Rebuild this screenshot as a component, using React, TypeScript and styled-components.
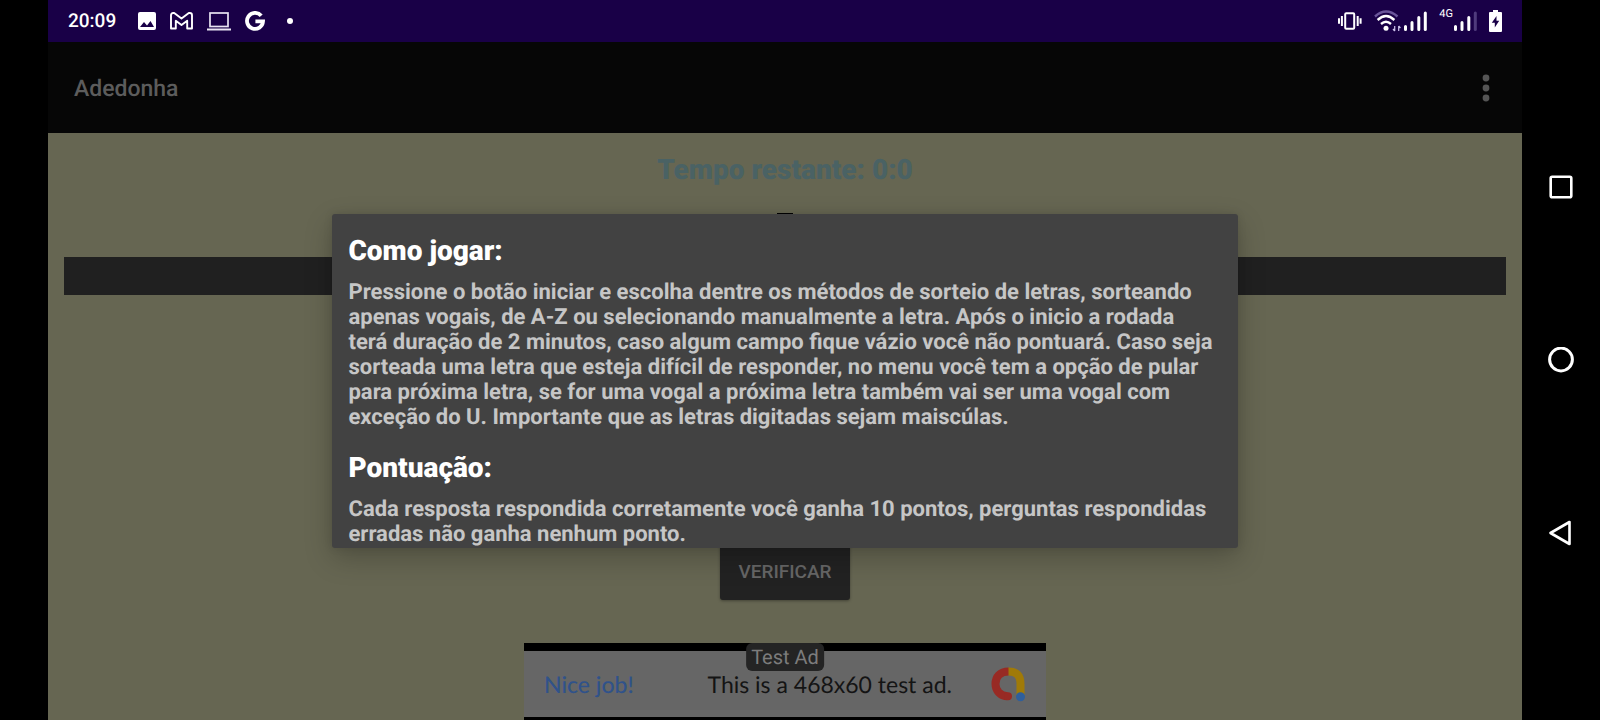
import React from "react";
import styled, { createGlobalStyle } from "styled-components";

const GlobalStyle = createGlobalStyle`
  *, *::before, *::after { box-sizing: border-box; }
  body {
    margin: 0;
    background: #000;
    font-family: Roboto, "Liberation Sans", sans-serif;
    text-rendering: geometricPrecision;
  }
  h1, h2, p { margin: 0; }
  button { padding: 0; border: 0; font: inherit; cursor: pointer; }
  svg { display: block; }
`;

const Device = styled.div`
  display: grid;
  grid-template-columns: 48px 1fr 78px;
  min-height: 100vh;
  background: #000;
`;

const Screen = styled.div`
  grid-column: 2;
  display: flex;
  flex-direction: column;
  background: #666652;
`;

const StatusBar = styled.header`
  display: flex;
  align-items: center;
  justify-content: space-between;
  height: 42px;
  padding: 0 20px;
  background: #190047;
  color: #fff;
`;

const StatusGroup = styled.div<{ $gap: number }>`
  display: flex;
  align-items: center;
  gap: ${(p) => p.$gap}px;
`;

const Clock = styled.time`
  font-size: 19px;
  font-weight: 500;
  line-height: 24px;
`;

const Activity = styled.div`
  position: relative;
  flex: 1;
  display: flex;
  flex-direction: column;
`;

const AppBar = styled.div`
  display: flex;
  align-items: center;
  justify-content: space-between;
  height: 91px;
  padding: 0 20px 0 26px;
  background: #060606;
`;

const AppTitle = styled.h1`
  padding-top: 2px;
  color: #5c5c5c;
  font-size: 23px;
  font-weight: 500;
  line-height: 28px;
`;

const IconButton = styled.button`
  display: grid;
  place-items: center;
  width: 32px;
  height: 48px;
  background: transparent;
`;

const Game = styled.main`
  flex: 1;
  display: flex;
  flex-direction: column;
  align-items: center;
`;

const Timer = styled.p`
  padding-top: 20px;
  color: #4a6264;
  font-size: 28px;
  font-weight: 900;
  line-height: 34px;
`;

const LetterSlot = styled.div`
  width: 16px;
  height: 2px;
  margin-top: 26px;
  background: #000;
`;

const AnswerStrip = styled.div`
  align-self: stretch;
  height: 38px;
  margin: 42px 16px 0;
  background: #202020;
`;

const Footer = styled.div`
  display: flex;
  flex-direction: column;
  align-items: center;
  gap: 43px;
  margin-top: auto;
`;

const VerifyButton = styled.button`
  width: 130px;
  height: 56px;
  border-radius: 3px;
  background: #222;
  box-shadow: 0 1px 3px rgba(0, 0, 0, 0.35);
  color: #666;
  font-size: 19px;
  font-weight: 500;
  line-height: 24px;
`;

const AdBanner = styled.a`
  position: relative;
  display: flex;
  align-items: center;
  width: 522px;
  height: 77px;
  padding: 0 20px;
  border: solid #000;
  border-width: 8px 0 3px;
  background: #666;
  font-family: Lato, Roboto, sans-serif;
  font-size: 23px;
  line-height: 28px;
  text-decoration: none;
`;

const AdLabel = styled.span`
  position: absolute;
  top: -8px;
  left: 50%;
  padding: 0 5px;
  transform: translateX(-50%);
  border-radius: 6px;
  background: #242424;
  color: #7c7c7c;
  font-family: Roboto, sans-serif;
  font-size: 20px;
  line-height: 28px;
`;

const AdLead = styled.span`
  color: #30528a;
  font-weight: 500;
`;

const AdText = styled.span`
  margin-left: auto;
  margin-right: 38px;
  color: #141414;
`;

const Overlay = styled.div`
  position: absolute;
  inset: 0;
  display: grid;
  place-items: center;
`;

const Dialog = styled.section`
  width: 61.4%;
  padding: 19px 16px 1px;
  border-radius: 3px;
  background: #424242;
  box-shadow: 0 10px 28px rgba(0, 0, 0, 0.22), 0 0 8px rgba(0, 0, 0, 0.1);
`;

const DialogTitle = styled.h2`
  color: #fff;
  font-size: 28px;
  font-weight: 900;
  line-height: 35px;
`;

const DialogText = styled.p`
  margin-top: 12px;
  color: #c6c6c6;
  font-size: 22px;
  font-weight: 700;
  line-height: 25px;

  & + h2 { margin-top: 20px; }
`;

const SystemNav = styled.nav`
  display: flex;
  flex-direction: column;
  align-items: center;
  justify-content: center;
  gap: 125px;
`;

const NavButton = styled.button`
  display: grid;
  place-items: center;
  width: 48px;
  height: 48px;
  background: transparent;
`;

const ImageIcon = () => (
  <svg width="18" height="18" viewBox="0 0 18 18">
    <rect width="18" height="18" rx="2" fill="#fff" />
    <path d="M2 15l4-5 3 3.500 3.500-4.500L16 15z" fill="#190047" />
  </svg>
);

const MailIcon = () => (
  <svg width="23" height="18" viewBox="0 0 23 18" fill="none" stroke="#fff" strokeWidth="1.900" strokeLinejoin="round">
    <path d="M1 3.200Q1 1 3.200 1h1L11.500 6.600 18.800 1h1Q22 1 22 3.200V16.500H17.200V8.700L11.500 13 5.800 8.700V16.500H1z" />
  </svg>
);

const LaptopIcon = () => (
  <svg width="24" height="19" viewBox="0 0 24 19" fill="none" stroke="#e9e4f2" strokeWidth="1.700">
    <rect x="3" y="1" width="18" height="13.500" />
    <path d="M0 17.500h24" strokeWidth="2" />
  </svg>
);

const GoogleIcon = () => (
  <svg width="20" height="20" viewBox="0 0 20 20" fill="none" stroke="#fff" strokeWidth="3.800">
    <path d="M16.200 4.800A8 8 0 1 0 18 10.400H10.400" />
  </svg>
);

const DotIcon = () => (
  <svg width="6" height="6" viewBox="0 0 6 6">
    <circle cx="3" cy="3" r="3" fill="#fff" />
  </svg>
);

const VibrateIcon = () => (
  <svg width="24" height="18" viewBox="0 0 24 18" fill="none" stroke="#fff" strokeWidth="2">
    <rect x="7.200" y="1.200" width="9" height="15.600" rx="1" />
    <path d="M3.900 4v10M1 6.300v5.400M19.700 4v10M22.600 6.300v5.400" />
  </svg>
);

const WifiIcon = () => (
  <svg width="27" height="22" viewBox="0 0 27 22" fill="none" stroke="#fff" strokeWidth="2.400">
    <path d="M1 6.500Q12 -3.500 23.500 6.500" stroke="#6a559a" />
    <path d="M3.600 10Q12 2.200 20.400 10M7 14Q12 9.600 17 14" />
    <circle cx="12" cy="18.200" r="2.500" fill="#fff" stroke="none" />
    <path d="M20.700 16v5M19 19l1.700 2M24.700 21v-5M26.400 18l-1.700-2" strokeWidth="1.200" stroke="#cfc4ee" />
  </svg>
);

const SignalIcon = ({ weak = false }: { weak?: boolean }) => (
  <svg width="23" height="20" viewBox="0 0 23 20" fill="none" stroke="#fff" strokeWidth="3" strokeLinecap="round">
    <path d="M1.500 15.500v3M8 11.500v7M14.800 6.500v12" />
    <path d="M21.300 2v16.500" stroke={weak ? "#4f3b7c" : "#fff"} />
  </svg>
);

const MobileSignal = styled.div`
  display: flex;
  align-items: center;
  gap: 1px;
  height: 26px;
`;

const NetworkType = styled.span`
  align-self: flex-start;
  font-size: 11px;
  line-height: 12px;
`;

const BatteryIcon = () => (
  <svg width="13" height="22" viewBox="0 0 13 22">
    <path d="M4 0h5v2h3q1 0 1 1v18q0 1-1 1H1q-1 0-1-1V3q0-1 1-1h3z" fill="#fff" />
    <path d="M7.500 6L2.800 12.800H5.800V17.500L10.200 10.800H7.500z" fill="#190047" />
  </svg>
);

const MoreIcon = () => (
  <svg width="8" height="28" viewBox="0 0 8 28" fill="#555">
    <circle cx="4" cy="4" r="3.400" />
    <circle cx="4" cy="14" r="3.400" />
    <circle cx="4" cy="24" r="3.400" />
  </svg>
);

const AdMobIcon = () => (
  <svg width="36" height="36" viewBox="0 0 36 36" fill="none" strokeWidth="8">
    <path d="M18 5.500Q30.500 5 30.500 18V29" stroke="#a07a08" />
    <path d="M18.500 5.500C10 5.500 5.500 11 5.500 18c0 7 5 12 12 12.300" stroke="#982a24" />
    <circle cx="18" cy="30.300" r="4" fill="#982a24" stroke="none" />
    <circle cx="30.500" cy="30.800" r="4.500" fill="#2f5f9c" stroke="none" />
  </svg>
);

const RecentsIcon = () => (
  <svg width="24" height="24" viewBox="0 0 24 24" fill="none" stroke="#fff" strokeWidth="2.600">
    <rect x="1.700" y="1.700" width="20.600" height="20.600" rx="1.500" />
  </svg>
);

const HomeIcon = () => (
  <svg width="26" height="26" viewBox="0 0 26 26" fill="none" stroke="#fff" strokeWidth="3">
    <circle cx="13" cy="12.500" r="11.400" />
  </svg>
);

const BackIcon = () => (
  <svg width="24" height="26" viewBox="0 0 24 26" fill="none" stroke="#fff" strokeWidth="2.600" strokeLinejoin="round">
    <path d="M1.500 13L20.500 2V24z" />
  </svg>
);

export default function App() {
  return (
    <>
      <GlobalStyle />
      <Device>
        <Screen>
          <StatusBar>
            <StatusGroup $gap={14}>
              <StatusGroup $gap={22}>
                <Clock>20:09</Clock>
                <ImageIcon />
              </StatusGroup>
              <MailIcon />
              <LaptopIcon />
              <StatusGroup $gap={22}>
                <GoogleIcon />
                <DotIcon />
              </StatusGroup>
            </StatusGroup>
            <StatusGroup $gap={12}>
              <VibrateIcon />
              <StatusGroup $gap={3}>
                <WifiIcon />
                <SignalIcon />
              </StatusGroup>
              <MobileSignal>
                <NetworkType>4G</NetworkType>
                <SignalIcon weak />
              </MobileSignal>
              <BatteryIcon />
            </StatusGroup>
          </StatusBar>
          <Activity>
            <AppBar>
              <AppTitle>Adedonha</AppTitle>
              <IconButton type="button" aria-label="Mais opções">
                <MoreIcon />
              </IconButton>
            </AppBar>
            <Game>
              <Timer>Tempo restante: 0:0</Timer>
              <LetterSlot />
              <AnswerStrip />
              <Footer>
                <VerifyButton type="button">VERIFICAR</VerifyButton>
                <AdBanner href="#">
                  <AdLabel>Test Ad</AdLabel>
                  <AdLead>Nice job!</AdLead>
                  <AdText>This is a 468x60 test ad.</AdText>
                  <AdMobIcon />
                </AdBanner>
              </Footer>
            </Game>
            <Overlay>
              <Dialog role="dialog" aria-label="Como jogar">
                <DialogTitle>Como jogar:</DialogTitle>
                <DialogText>
                  Pressione o botão iniciar e escolha dentre os métodos de sorteio de letras, sorteando
                  apenas vogais, de A-Z ou selecionando manualmente a letra. Após o inicio a rodada
                  <br />
                  terá duração de 2 minutos, caso algum campo fique vázio você não pontuará. Caso seja
                  sorteada uma letra que esteja difícil de responder, no menu você tem a opção de pular
                  para próxima letra, se for uma vogal a próxima letra também vai ser uma vogal com
                  exceção do U. Importante que as letras digitadas sejam maiscúlas.
                </DialogText>
                <DialogTitle>Pontuação:</DialogTitle>
                <DialogText>
                  Cada resposta respondida corretamente você ganha 10 pontos, perguntas respondidas
                  erradas não ganha nenhum ponto.
                </DialogText>
              </Dialog>
            </Overlay>
          </Activity>
        </Screen>
        <SystemNav aria-label="Sistema">
          <NavButton type="button" aria-label="Recentes">
            <RecentsIcon />
          </NavButton>
          <NavButton type="button" aria-label="Início">
            <HomeIcon />
          </NavButton>
          <NavButton type="button" aria-label="Voltar">
            <BackIcon />
          </NavButton>
        </SystemNav>
      </Device>
    </>
  );
}
